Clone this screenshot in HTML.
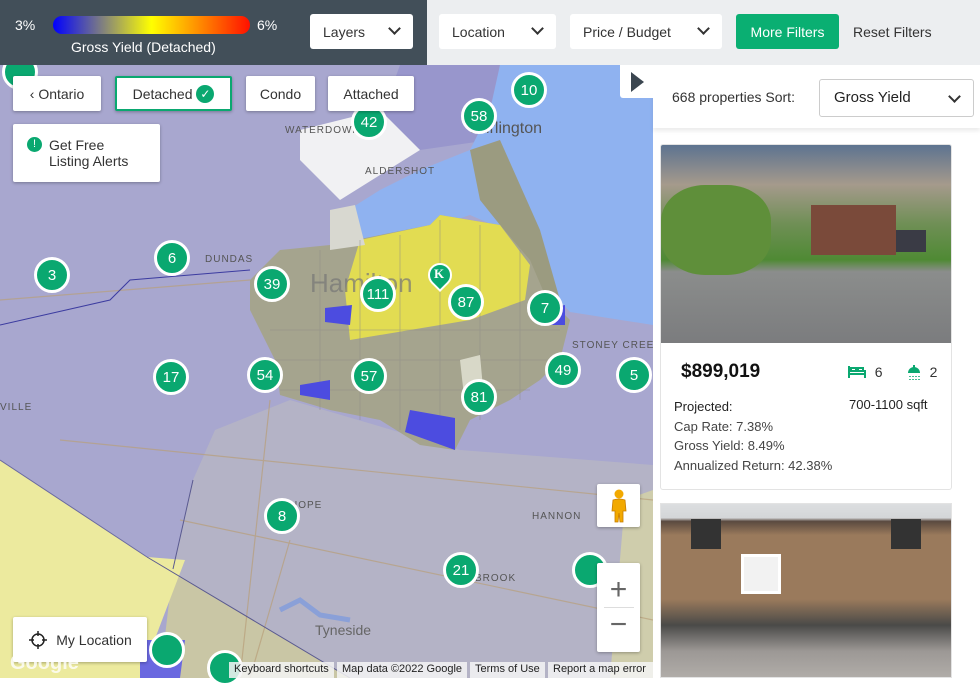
<!DOCTYPE html>
<html><head><meta charset="utf-8"><style>
*{box-sizing:border-box;margin:0;padding:0}
body{width:980px;height:678px;overflow:hidden;font-family:"Liberation Sans",sans-serif;position:relative;background:#fff}
.top{position:absolute;left:0;top:0;width:980px;height:65px;background:#eceef0}
.dark{position:absolute;left:0;top:0;width:427px;height:65px;background:#424f59}
.btn{position:absolute;background:#fff;border-radius:3px;font-size:14px;color:#333;display:flex;align-items:center;padding-left:13px}
.chev{position:absolute;right:14px;top:10px;width:9px;height:9px;border-right:2px solid #333;border-bottom:2px solid #333;transform:rotate(45deg)}
.mk{position:absolute;width:36px;height:36px;margin:-18px 0 0 -18px;border-radius:50%;background:#0aa870;border:3px solid #fff;color:#fff;font-size:15px;display:flex;align-items:center;justify-content:center}
.mb{position:absolute;background:#fff;border-radius:2px;font-size:14px;color:#333;display:flex;align-items:center;justify-content:center;box-shadow:0 1px 3px rgba(0,0,0,.3)}
.lbl{position:absolute;font-size:10px;color:#555;letter-spacing:1px}
.att{position:absolute;top:662px;height:16px;background:rgba(245,245,245,.85);font-size:11px;color:#222;padding:1px 5px}
</style></head><body>
<svg style="position:absolute;left:0;top:0" width="653" height="678">
<rect width="653" height="678" fill="#a8a7cf"/>
<polygon points="215,430 290,400 460,450 653,465 653,678 350,678 147,557 173,569 193,480" fill="#b4b3c6"/>
<polygon points="173,569 147,557 350,678 160,678" fill="#c9c6a5"/>
<polygon points="0,460 147,557 160,678 140,678 0,678" fill="#ecea9e"/>
<polygon points="147,557 185,560 140,678" fill="#ecea9e"/>
<polygon points="625,500 653,490 653,678 610,678" fill="#cfcdac"/>
<polygon points="400,65 500,65 490,140 420,150 380,120" fill="#9896cc"/>
<polygon points="300,130 380,110 420,150 340,200 300,160" fill="#f1f1f3"/>
<polygon points="500,65 653,65 653,325 570,312 545,285 530,255 500,228 470,215 440,225 400,245 365,240 345,212 380,190 420,170 470,150 490,110" fill="#8fb2f0"/>
<polygon points="470,150 500,140 540,230 560,300 540,290 520,250 480,200" fill="#9b9b80"/>
<polygon points="250,280 280,250 330,245 430,225 440,215 500,225 530,260 545,295 570,320 560,360 540,380 510,400 470,420 455,450 420,445 380,420 330,410 280,395 275,360 250,310" fill="#a5a48e"/>
<polygon points="360,240 430,225 440,215 500,225 530,265 525,300 470,320 410,330 350,340 345,290" fill="#e2dc52"/>
<polygon points="330,210 355,205 365,245 330,250" fill="#d8d8d0"/>
<g stroke="#8d8c88" stroke-width=".8" fill="none" opacity=".6">
<path d="M270,330 L560,330 M275,360 L560,360 M280,390 L530,390 M320,250 L320,410 M360,240 L360,420 M400,235 L400,430 M440,220 L440,445 M480,225 L480,420 M520,250 L520,400"/>
</g>
<polygon points="300,385 330,380 330,400 300,395" fill="#4c4ce0"/>
<polygon points="325,308 352,305 350,325 325,322" fill="#4c4ce0"/>
<polygon points="410,410 455,418 455,450 405,432" fill="#4c4ce0"/>
<polygon points="540,310 565,305 565,325 545,325" fill="#4c4ce0"/>
<polygon points="140,640 185,640 180,678 140,678" fill="#6a68e0"/>
<polygon points="460,360 480,355 485,410 465,405" fill="#d8d8c8"/>
<g stroke="#b89f7a" stroke-width="1.2" fill="none" opacity=".7">
<path d="M0,300 L250,280"/><path d="M60,440 L653,500"/><path d="M180,520 L653,620"/><path d="M270,400 L240,678"/><path d="M290,540 L250,678"/>
</g>
<path d="M0,325 L110,300 L130,280 L250,270" stroke="#3c3ca0" fill="none" stroke-width="1"/>
<path d="M193,480 L173,569 M147,557 L350,678" stroke="#5a5a90" fill="none" stroke-width="1"/>
<path d="M0,460 L147,557" stroke="#6a6aa0" fill="none" stroke-width="1"/>
<path d="M280,610 L300,600 L320,615 L350,620" stroke="#8aa0d8" fill="none" stroke-width="5"/>
</svg>
<div class="lbl" style="left:285px;top:125px">WATERDOWN</div>
<div class="lbl" style="left:365px;top:166px">ALDERSHOT</div>
<div class="lbl" style="left:205px;top:254px">DUNDAS</div>
<div class="lbl" style="left:572px;top:340px">STONEY CREEK</div>
<div class="lbl" style="left:532px;top:511px">HANNON</div>
<div class="lbl" style="left:290px;top:500px">HOPE</div>
<div class="lbl" style="left:475px;top:573px">BROOK</div>
<div class="lbl" style="left:0;top:402px">VILLE</div>
<div style="position:absolute;left:310px;top:268px;font-size:26px;color:#777;opacity:.7">Hamilton</div>
<div style="position:absolute;left:470px;top:120px;font-size:16px;color:#555">Burlington</div>
<div style="position:absolute;left:315px;top:622px;font-size:14px;color:#666">Tyneside</div>
<div class="mk" style="left:20px;top:72px"></div>
<div class="mk" style="left:369px;top:122px">42</div>
<div class="mk" style="left:479px;top:116px">58</div>
<div class="mk" style="left:529px;top:90px">10</div>
<div class="mk" style="left:52px;top:275px">3</div>
<div class="mk" style="left:172px;top:258px">6</div>
<div class="mk" style="left:272px;top:284px">39</div>
<div class="mk" style="left:378px;top:294px">111</div>
<div class="mk" style="left:466px;top:302px">87</div>
<div class="mk" style="left:545px;top:308px">7</div>
<div class="mk" style="left:171px;top:377px">17</div>
<div class="mk" style="left:265px;top:375px">54</div>
<div class="mk" style="left:369px;top:376px">57</div>
<div class="mk" style="left:479px;top:397px">81</div>
<div class="mk" style="left:563px;top:370px">49</div>
<div class="mk" style="left:634px;top:375px">5</div>
<div class="mk" style="left:282px;top:516px">8</div>
<div class="mk" style="left:461px;top:570px">21</div>
<div class="mk" style="left:590px;top:570px"></div>
<div class="mk" style="left:167px;top:650px"></div>
<div class="mk" style="left:225px;top:668px"></div>
<div style="position:absolute;left:428px;top:263px;width:24px;height:24px;border-radius:50% 50% 50% 0;transform:rotate(-45deg);background:#0aa870;border:2px solid #fff"></div>
<div style="position:absolute;left:434px;top:266px;color:#fff;font-size:13px;font-weight:bold;font-family:'Liberation Serif',serif">K</div>

<div class="mb" style="left:13px;top:76px;width:88px;height:35px">&lsaquo;&nbsp;Ontario</div>
<div class="mb" style="left:115px;top:76px;width:117px;height:35px;border:2px solid #0aa870">Detached&nbsp;<span style="display:inline-block;width:18px;height:18px;border-radius:50%;background:#0aa870;color:#fff;font-size:12px;line-height:18px;text-align:center">✓</span></div>
<div class="mb" style="left:246px;top:76px;width:69px;height:35px">Condo</div>
<div class="mb" style="left:328px;top:76px;width:86px;height:35px">Attached</div>
<div class="mb" style="left:13px;top:124px;width:147px;height:58px;justify-content:flex-start;padding-left:14px;line-height:16px"><span style="display:inline-block;width:15px;height:15px;border-radius:50%;background:#0aa870;color:#fff;font-size:11px;text-align:center;line-height:15px;margin-right:7px;align-self:flex-start;margin-top:13px">!</span><span>Get Free<br>Listing Alerts</span></div>
<div class="mb" style="left:13px;top:617px;width:134px;height:45px"><svg width="20" height="20" viewBox="0 0 20 20" style="margin-right:8px"><circle cx="10" cy="10" r="6" fill="none" stroke="#222" stroke-width="1.5"/><path d="M10,1V6M10,14V19M1,10H6M14,10H19" stroke="#222" stroke-width="1.5"/></svg>My Location</div>
<div class="mb" style="left:597px;top:484px;width:43px;height:43px"><svg width="20" height="34" viewBox="0 0 20 34"><circle cx="10" cy="5" r="4.5" fill="#f2a900"/><path d="M4,11 Q10,9 16,11 L17,22 L14,22 L14,33 L11,33 L10,24 L9,33 L6,33 L6,22 L3,22 Z" fill="#f2a900" stroke="#c77d00" stroke-width=".8"/></svg></div>
<div class="mb" style="left:597px;top:563px;width:43px;height:89px;flex-direction:column;font-size:30px;color:#666"><div>+</div><div style="width:30px;border-top:1px solid #ddd"></div><div>−</div></div>
<div style="position:absolute;left:10px;top:652px;font-size:20px;color:#fff;font-weight:bold;opacity:.8">Google</div>
<div class="att" style="left:229px">Keyboard shortcuts</div>
<div class="att" style="left:337px">Map data ©2022 Google</div>
<div class="att" style="left:470px">Terms of Use</div>
<div class="att" style="left:548px;width:105px">Report a map error</div>

<div class="top"></div>
<div class="dark"></div>
<div style="position:absolute;left:15px;top:17px;color:#fff;font-size:14px">3%</div>
<div style="position:absolute;left:53px;top:16px;width:197px;height:18px;border-radius:9px;background:linear-gradient(90deg,#0000ff,#ffff00 50%,#ff1000)"></div>
<div style="position:absolute;left:257px;top:17px;color:#fff;font-size:14px">6%</div>
<div style="position:absolute;left:71px;top:39px;color:#fff;font-size:14px">Gross Yield (Detached)</div>
<div class="btn" style="left:310px;top:14px;width:103px;height:35px">Layers<div class="chev"></div></div>
<div class="btn" style="left:439px;top:14px;width:117px;height:35px">Location<div class="chev"></div></div>
<div class="btn" style="left:570px;top:14px;width:152px;height:35px">Price / Budget<div class="chev"></div></div>
<div style="position:absolute;left:736px;top:14px;width:103px;height:35px;background:#0aaf72;border-radius:3px;color:#fff;font-size:14px;display:flex;align-items:center;justify-content:center">More Filters</div>
<div style="position:absolute;left:853px;top:24px;font-size:14px;color:#333">Reset Filters</div>

<div style="position:absolute;left:653px;top:65px;width:327px;height:613px;background:#fff"></div>
<div style="position:absolute;left:653px;top:65px;width:327px;height:63px;box-shadow:0 3px 4px rgba(0,0,0,.08)"></div>
<div style="position:absolute;left:620px;top:65px;width:33px;height:33px;background:#fff;border-radius:0 0 0 3px"></div>
<div style="position:absolute;left:631px;top:72px;width:0;height:0;border-left:13px solid #3b4650;border-top:10px solid transparent;border-bottom:10px solid transparent"></div>
<div style="position:absolute;left:672px;top:89px;font-size:14px;color:#333">668 properties Sort:</div>
<div style="position:absolute;left:819px;top:79px;width:155px;height:38px;border:1px solid #ccc;border-radius:3px;font-size:15px;color:#222;padding:9px 14px">Gross Yield<div class="chev" style="top:12px"></div></div>
<div style="position:absolute;left:660px;top:144px;width:292px;height:346px;border:1px solid #e3e3e3;border-radius:3px;overflow:hidden">
<div style="height:198px;background:linear-gradient(180deg,#5d7390 0%,#a59a8c 20%,#6f8f55 40%,#4f8a34 58%,#8b8d8c 64%,#7b7c7e 100%);position:relative">
<div style="position:absolute;left:0;top:40px;width:110px;height:90px;background:#5f8f3a;border-radius:40%"></div>
<div style="position:absolute;left:150px;top:60px;width:85px;height:50px;background:#7a4a3a"></div>
<div style="position:absolute;left:235px;top:85px;width:30px;height:22px;background:#3a3b45"></div>
</div>
<div style="position:absolute;left:20px;top:216px;font-size:19px;font-weight:bold;color:#111">$899,019</div>
<div style="position:absolute;left:186px;top:219px;font-size:14px;color:#333;display:flex;align-items:center">
<svg width="20" height="14" viewBox="0 0 20 14"><path d="M2,1V13M18,5V13M2,9H18M2,6H18M4,6V3H9V6M11,6V3H16V6" stroke="#0aa870" stroke-width="2" fill="none"/></svg>&nbsp;&nbsp;6&nbsp;&nbsp;&nbsp;&nbsp;&nbsp;&nbsp;
<svg width="16" height="16" viewBox="0 0 16 16"><path d="M2,9 A6,6 0 0 1 14,9 Z" fill="#0aa870"/><rect x="7" y="1" width="2" height="3" fill="#0aa870"/><path d="M4,12V13M7,12V13M10,12V13M13,12V13M4,15V16M7,15V16M10,15V16M13,15V16" stroke="#0aa870" stroke-width="1.5"/></svg>&nbsp;&nbsp;2</div>
<div style="position:absolute;left:13px;top:252px;font-size:13px;color:#222;line-height:19.5px">Projected:<br><span style="color:#444">Cap Rate: 7.38%<br>Gross Yield: 8.49%<br>Annualized Return: 42.38%</span></div>
<div style="position:absolute;left:188px;top:252px;font-size:13px;color:#222">700-1100 sqft</div>
</div>
<div style="position:absolute;left:660px;top:503px;width:292px;height:175px;border:1px solid #e3e3e3;overflow:hidden;background:linear-gradient(180deg,#dcdee0 0%,#d4d6d8 8%,#5a4a40 10%,#9a7a5c 18%,#9a7a5c 55%,#4a4a48 70%,#9c9895 85%,#b0aca8 100%)">
<div style="position:absolute;left:80px;top:50px;width:40px;height:40px;background:#f2f2f2;border:3px solid #fff"></div>
<div style="position:absolute;left:30px;top:15px;width:30px;height:30px;background:#333"></div>
<div style="position:absolute;left:230px;top:15px;width:30px;height:30px;background:#333"></div>
</div>
</body></html>
